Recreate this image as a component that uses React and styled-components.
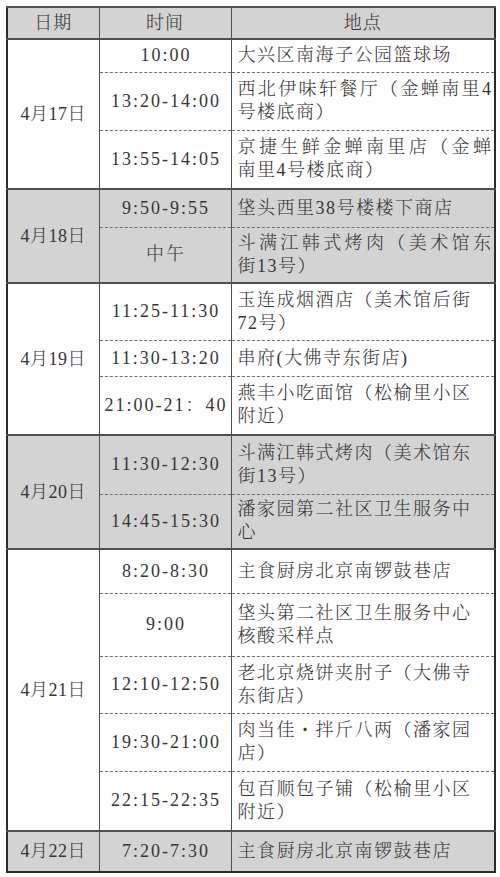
import React from "react";
import styled, { createGlobalStyle } from "styled-components";

const GlobalStyle = createGlobalStyle`
  html, body { margin: 0; padding: 0; background: #fff; }
  body {
    font-family: "Liberation Serif", "Noto Serif CJK SC", "Noto Sans CJK SC", serif;
    color: #363636;
  }
`;

const Table = styled.table`
  margin: 6px 0 0 6px;
  width: 488px;
  border-collapse: collapse;
  table-layout: fixed;
  border: 2px solid #2b2b2b;
  font-size: 18px;
  line-height: 23px;
  font-weight: 300;
`;

const Row = styled.tr`
  height: ${(p) => p.$h}px;
  background: ${(p) => (p.$shade ? "#d3d3d3" : "#fff")};
  border-top: ${(p) => (p.$first ? "2px solid #505050" : "1px dashed #707070")};
`;

const HeadCell = styled.th`
  font-weight: 300;
  text-align: center;
  padding: 0;
  letter-spacing: 1px;
  border-left: 1.5px solid #505050;
`;

const DateCell = styled.td`
  text-align: center;
  padding: 0;
  letter-spacing: 0.5px;
  vertical-align: middle;
  border-right: 1.5px solid #505050;
`;

const TimeCell = styled.td`
  text-align: center;
  padding: 0 0 0 2px;
  letter-spacing: 2px;
  vertical-align: middle;
  white-space: nowrap;
  border-right: 1.5px solid #505050;
`;

const PlaceCell = styled.td`
  padding: 0 3px 0 6px;
  letter-spacing: 1.5px;
  vertical-align: middle;
  text-align: left;
`;

const Line = styled.span`
  display: block;
  white-space: nowrap;
  text-align: ${(p) => (p.$fill ? "justify" : "left")};
  text-align-last: ${(p) => (p.$fill ? "justify" : "auto")};
  letter-spacing: ${(p) => (p.$fill ? "0" : "1.5px")};
`;

const groups = [
  {
    date: "4月17日",
    shade: false,
    rows: [
      { t: "10:00", h: 33, lines: ["大兴区南海子公园篮球场"] },
      { t: "13:20-14:00", h: 58, fill: true, lines: ["西北伊味轩餐厅（金蝉南里4", "号楼底商）"] },
      { t: "13:55-14:05", h: 59, fill: true, lines: ["京捷生鲜金蝉南里店（金蝉", "南里4号楼底商）"] },
    ],
  },
  {
    date: "4月18日",
    shade: true,
    rows: [
      { t: "9:50-9:55", h: 38, lines: ["垡头西里38号楼楼下商店"] },
      { t: "中午", h: 56, fill: true, lines: ["斗满江韩式烤肉（美术馆东", "街13号）"] },
    ],
  },
  {
    date: "4月19日",
    shade: false,
    rows: [
      { t: "11:25-11:30", h: 57, lines: ["玉连成烟酒店（美术馆后街", "72号）"] },
      { t: "11:30-13:20", h: 36, lines: ["串府(大佛寺东街店)"] },
      { t: "21:00-21：40", h: 59, lines: ["燕丰小吃面馆（松榆里小区", "附近）"] },
    ],
  },
  {
    date: "4月20日",
    shade: true,
    rows: [
      { t: "11:30-12:30", h: 59, lines: ["斗满江韩式烤肉（美术馆东", "街13号）"] },
      { t: "14:45-15:30", h: 55, lines: ["潘家园第二社区卫生服务中", "心"] },
    ],
  },
  {
    date: "4月21日",
    shade: false,
    rows: [
      { t: "8:20-8:30", h: 44, lines: ["主食厨房北京南锣鼓巷店"] },
      { t: "9:00", h: 63, lines: ["垡头第二社区卫生服务中心", "核酸采样点"] },
      { t: "12:10-12:50", h: 57, lines: ["老北京烧饼夹肘子（大佛寺", "东街店）"] },
      { t: "19:30-21:00", h: 58, lines: ["肉当佳・拌斤八两（潘家园", "店）"] },
      { t: "22:15-22:35", h: 60, lines: ["包百顺包子铺（松榆里小区", "附近）"] },
    ],
  },
  {
    date: "4月22日",
    shade: true,
    rows: [{ t: "7:20-7:30", h: 41, lines: ["主食厨房北京南锣鼓巷店"] }],
  },
];

export default function App() {
  return (
    <>
      <GlobalStyle />
      <Table>
        <colgroup>
          <col style={{ width: 92 }} />
          <col style={{ width: 132 }} />
          <col style={{ width: 264 }} />
        </colgroup>
        <thead>
          <Row $h={32} $shade $first>
            <HeadCell>日期</HeadCell>
            <HeadCell>时间</HeadCell>
            <HeadCell>地点</HeadCell>
          </Row>
        </thead>
        <tbody>
          {groups.map((g) =>
            g.rows.map((r, i) => (
              <Row key={g.date + i} $h={r.h} $shade={g.shade} $first={i === 0}>
                {i === 0 && <DateCell rowSpan={g.rows.length}>{g.date}</DateCell>}
                <TimeCell>{r.t}</TimeCell>
                <PlaceCell>
                  {r.lines.map((l, j) => (
                    <Line key={j} $fill={r.fill && j === 0 && r.lines.length > 1}>
                      {l}
                    </Line>
                  ))}
                </PlaceCell>
              </Row>
            ))
          )}
        </tbody>
      </Table>
    </>
  );
}
